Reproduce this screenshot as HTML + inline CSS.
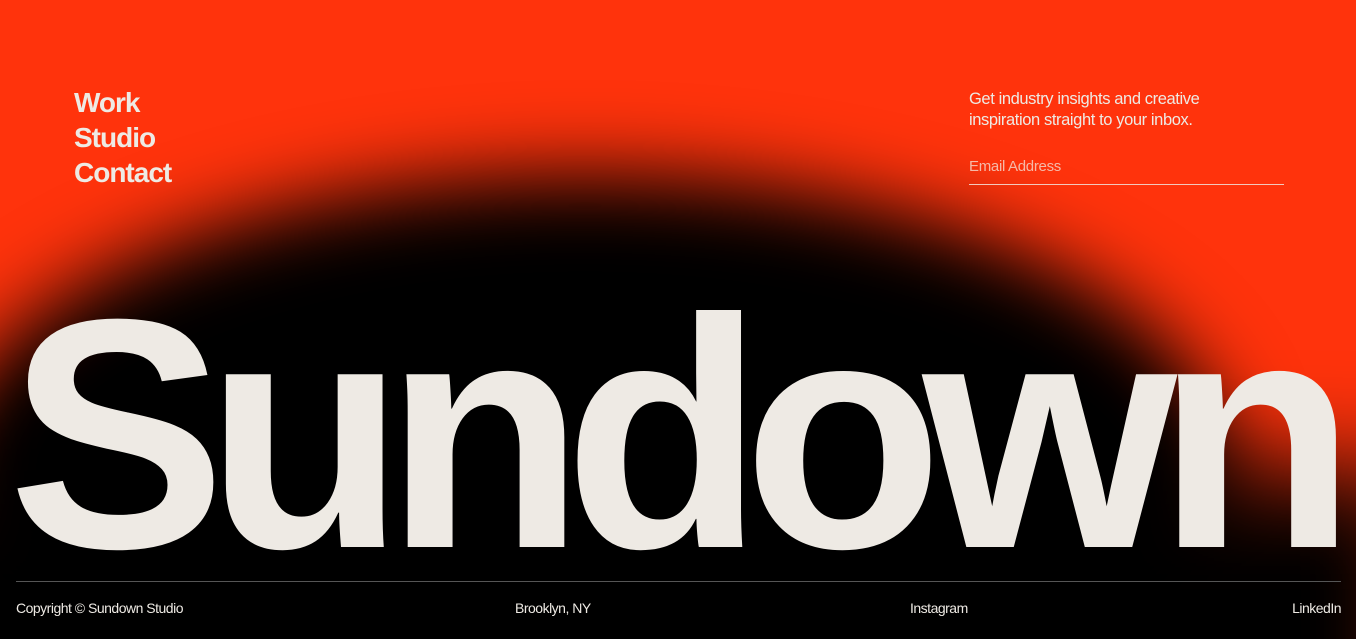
<!DOCTYPE html>
<html><head><meta charset="utf-8"><style>
html,body{margin:0;padding:0;width:1356px;height:639px;overflow:hidden}
.wrap{position:relative;width:1356px;height:639px;overflow:hidden;background:#ff330c;font-family:"Liberation Sans",Arial,sans-serif;color:#eeeae4}
.blob{position:absolute;left:-60px;top:175px;width:1290px;height:600px;border-radius:50%;background:#000;filter:blur(40px)}
.blob2{position:absolute;left:-300px;top:470px;width:1720px;height:300px;background:#000;filter:blur(50px)}
.nav{position:absolute;left:74px;top:85px;font-weight:bold;font-size:28px;line-height:35px;letter-spacing:-1px}
.news{position:absolute;left:969px;top:89px;font-size:16.5px;line-height:21px;letter-spacing:-0.4px;width:260px}
.email{position:absolute;left:969px;top:158px;width:315px;border-bottom:1px solid #f3c9bd;font-size:15px;color:#f5b9a8;padding-bottom:9px;letter-spacing:-0.3px}
.big{position:absolute;left:8px;top:245px;font-weight:bold;font-size:327px;line-height:380px;letter-spacing:-20.5px;white-space:nowrap}
.line{position:absolute;left:16px;right:15px;top:581px;height:1px;background:#555}
.f{position:absolute;top:600px;font-size:14px;letter-spacing:-0.5px;color:#eeeae4}
</style></head><body><div class="wrap">
<div class="blob"></div><div class="blob2"></div>
<div class="nav">Work<br>Studio<br>Contact</div>
<div class="news">Get industry insights and creative inspiration straight to your inbox.</div>
<div class="email">Email Address</div>
<div class="big">Sundown</div>
<div class="line"></div>
<div class="f" style="left:16px">Copyright © Sundown Studio</div>
<div class="f" style="left:515px">Brooklyn, NY</div>
<div class="f" style="left:910px">Instagram</div>
<div class="f" style="right:15px">LinkedIn</div>
</div></body></html>
